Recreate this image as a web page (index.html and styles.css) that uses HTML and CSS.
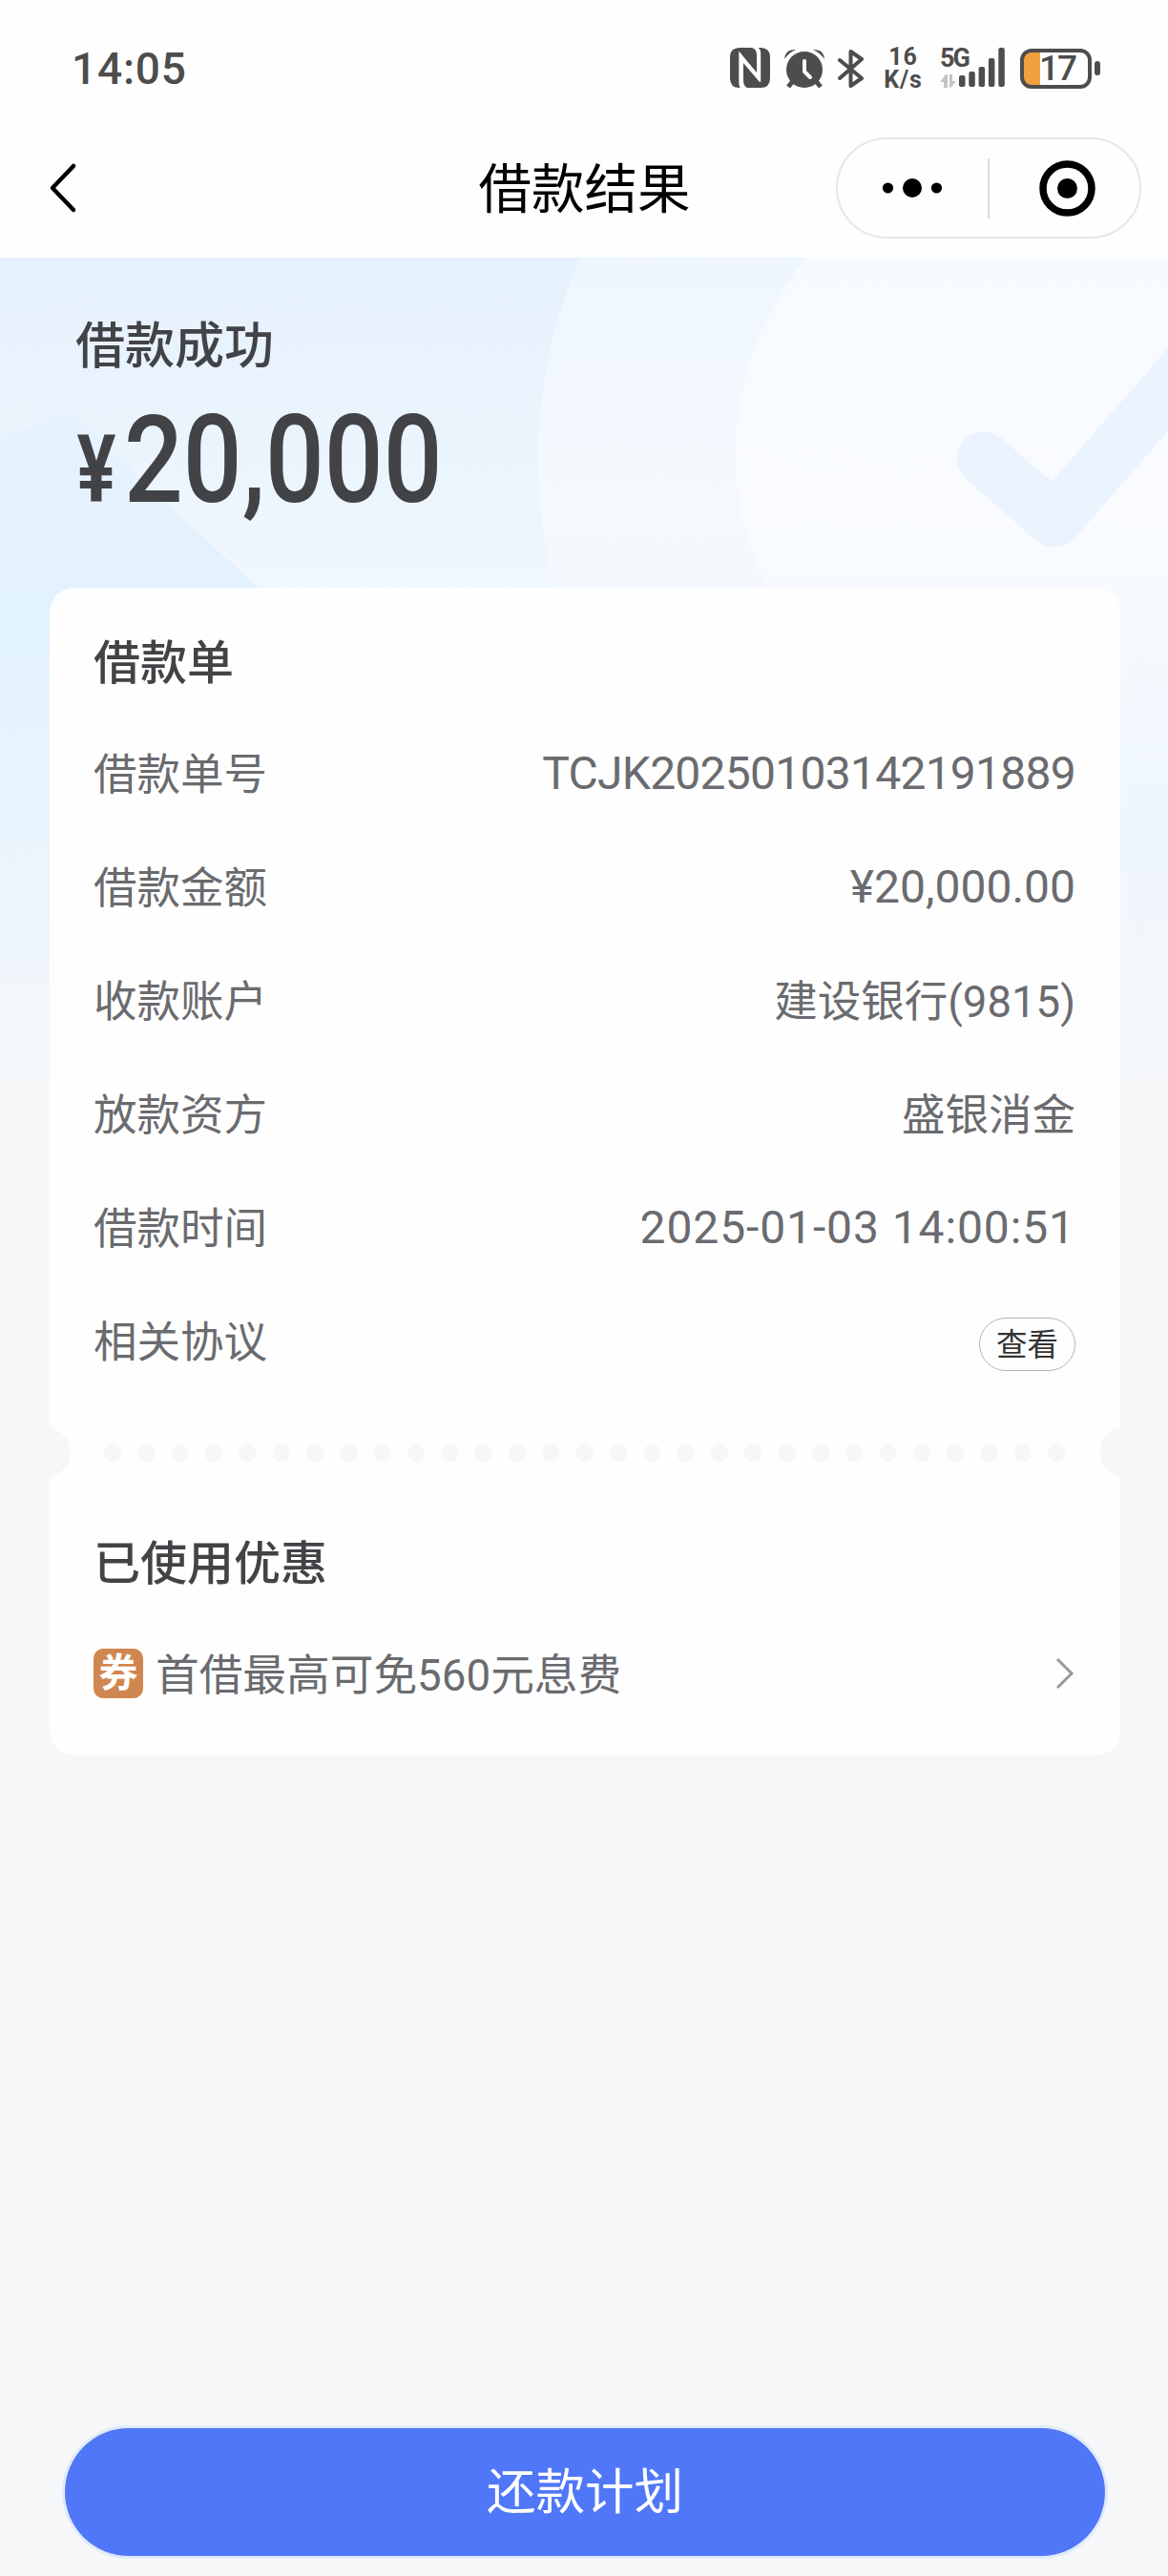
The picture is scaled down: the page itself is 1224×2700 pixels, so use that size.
FILE: index.html
```
<!DOCTYPE html>
<html lang="zh-CN">
<head>
    <meta charset="UTF-8">
    <meta name="viewport" content="width=device-width, initial-scale=1.0">
    <title>借款结果</title>
    <link rel="stylesheet" href="styles.css">
</head>
<body>
    <div class="status">
        <span class="clock">14:05</span>
        <div class="status-icons">
            <svg class="nfc" width="42" height="42" viewBox="0 0 42 42">
                <path fill="#4d4d4d" d="M10 0H23Q28 1 28 8V26L11 6V38Q11 41 13 42H10Q0 42 0 32V10Q0 0 10 0Z"/>
                <path fill="#4d4d4d" d="M29 0H32Q42 0 42 10V32Q42 42 32 42H18Q14 40 14 34V16L31 36V6Q31 2 29 0Z"/>
                <path fill="none" stroke="#fff" stroke-width="2.4" d="M12 42Q10.500 40 10.500 36V7L31 33V6Q31 2 28 0"/>
            </svg>
            <svg class="alarm" width="42" height="42" viewBox="0 0 42 42">
                <path stroke="#4d4d4d" stroke-width="5" d="M9 34L4 40M33 34L38 40"/>
                <circle cx="21" cy="22" r="19" fill="#4d4d4d"/>
                <path fill="#4d4d4d" d="M0 11Q1 0 12 1Q5 4 0 11ZM42 11Q41 0 30 1Q37 4 42 11Z"/>
                <path fill="none" stroke="#fff" stroke-width="4" stroke-linecap="round" stroke-linejoin="round" d="M21 13V24L27 30"/>
            </svg>
            <svg class="bt" width="28" height="42" viewBox="0 0 28 42">
                <path fill="none" stroke="#4d4d4d" stroke-width="4" stroke-linecap="round" stroke-linejoin="round" d="M2 12L25 31L13.500 39V3L25 11L2 31"/>
            </svg>
            <div class="speed"><span>16</span><span>K/s</span></div>
            <div class="network">
                <div class="network-type">
                    <span>5G</span>
                    <svg width="17" height="14" viewBox="0 0 17 14">
                        <path fill="#c4c4c4" d="M6 0H8V14H4V8H0ZM10 0H13V7H17L11 14H10Z"/>
                    </svg>
                </div>
                <svg class="bars" width="48" height="42" viewBox="0 0 48 42">
                    <g fill="#4d4d4d">
                        <rect x="0" y="29" width="6.500" height="12" rx="2"/>
                        <rect x="10.300" y="25" width="6.500" height="16" rx="2"/>
                        <rect x="20.600" y="20" width="6.500" height="21" rx="2"/>
                        <rect x="30.900" y="11" width="6.500" height="30" rx="2"/>
                        <rect x="41.300" y="0" width="6.500" height="41" rx="2"/>
                    </g>
                </svg>
            </div>
            <div class="battery"><span class="battery-box">17</span><i></i></div>
        </div>
    </div>

    <div class="navbar">
        <svg class="back" width="30" height="54" viewBox="0 0 30 54">
            <path fill="none" stroke="#000" stroke-width="4.500" stroke-linecap="round" stroke-linejoin="round" d="M26 4L4 27L26 50"/>
        </svg>
        <h1>借款结果</h1>
        <div class="capsule">
            <svg width="316" height="102" viewBox="0 0 316 102">
                <circle cx="52.500" cy="51" r="5.600"/>
                <circle cx="78" cy="51" r="10"/>
                <circle cx="103.500" cy="51" r="5.600"/>
                <path stroke="#dcdcdc" stroke-width="2" d="M158 20V83"/>
                <circle cx="240.500" cy="51.500" r="25.500" fill="none" stroke="#000" stroke-width="7.500"/>
                <circle cx="240.500" cy="51.500" r="10.500"/>
            </svg>
        </div>
    </div>

    <div class="page">
        <!-- 背景装饰 -->
        <svg class="page-bg" width="1224" height="870" viewBox="0 0 1224 870">
            <defs>
                <linearGradient id="sky" x1="0" y1="0" x2="0" y2="1">
                    <stop offset="0" stop-color="#e5f1fd"/>
                    <stop offset=".4" stop-color="#f0f7fd"/>
                    <stop offset=".7" stop-color="#eff6fd"/>
                    <stop offset="1" stop-color="#f5f7f9"/>
                </linearGradient>
                <linearGradient id="beam" x1="0" y1="0" x2="0" y2="1">
                    <stop offset="0" stop-color="#e0f0ff" stop-opacity=".4"/>
                    <stop offset=".35" stop-color="#e0f1ff" stop-opacity=".9"/>
                    <stop offset=".6" stop-color="#e6f4ff" stop-opacity=".8"/>
                    <stop offset="1" stop-color="#e6f4ff" stop-opacity="0"/>
                </linearGradient>
                <linearGradient id="ring" x1="0" y1="0" x2="0" y2="1">
                    <stop offset=".2" stop-color="#ecf5fe"/>
                    <stop offset=".55" stop-color="#f5f9fe"/>
                    <stop offset=".85" stop-color="#f5f9fe" stop-opacity="0"/>
                </linearGradient>
                <linearGradient id="disc" x1="0" y1="0" x2="0" y2="1">
                    <stop offset=".2" stop-color="#f7faff"/>
                    <stop offset=".6" stop-color="#f9fbff"/>
                    <stop offset=".95" stop-color="#f7fbff" stop-opacity="0"/>
                </linearGradient>
            </defs>
            <rect width="1224" height="870" fill="url(#sky)"/>
            <path d="M0 190L72 160L270 346L400 600L0 800Z" fill="url(#beam)"/>
            <circle cx="1084" cy="210" r="520" fill="url(#ring)"/>
            <circle cx="1091" cy="205" r="320" fill="url(#disc)"/>
            <path fill="none" stroke="#eaf3fe" stroke-width="57" stroke-linecap="round" stroke-linejoin="round" d="M1031 211L1105 275L1260 97"/>
        </svg>

        <div class="result">
            <h2>借款成功</h2>
            <p class="amount"><span class="yen">¥</span><span class="sum">20,000</span></p>
        </div>

        <div class="card">
            <h3>借款单</h3>
            <ul class="rows">
                <li><span>借款单号</span><span class="value number">TCJK20250103142191889</span></li>
                <li><span>借款金额</span><span class="value money">¥20,000.00</span></li>
                <li><span>收款账户</span><span class="value">建设银行(9815)</span></li>
                <li><span>放款资方</span><span class="value">盛银消金</span></li>
                <li><span>借款时间</span><span class="value time">2025-01-03 14:00:51</span></li>
                <li><span>相关协议</span><a class="view">查看</a></li>
            </ul>
            <div class="tear"><div class="dots"></div></div>
            <h3 class="used">已使用优惠</h3>
            <div class="coupon">
                <span class="tag">券</span>
                <span class="coupon-name">首借最高可免560元息费</span>
                <svg width="20" height="34" viewBox="0 0 20 34">
                    <path fill="none" stroke="#999" stroke-width="3" d="M1 2L16 17L1 32"/>
                </svg>
            </div>
        </div>

        <button class="plan">还款计划</button>
    </div>
</body>
</html>
```
FILE: styles.css
```
*{
    box-sizing: border-box;
    margin: 0;
    padding: 0;
}
body{
    width: 1224px;
    height: 2700px;
    display: flex;
    flex-direction: column;
    background-color: #fefefe;
    font-family: Roboto, "Noto Sans CJK SC", sans-serif;
    color: #6a6b6f;
    overflow: hidden;
}

/* 状态栏 */
.status{
    height: 144px;
    padding: 50px 71px 0 75px;
    display: flex;
    justify-content: space-between;
    align-items: flex-start;
    color: #4d4d4d;
}
.clock{
    font-size: 46px;
    font-weight: 500;
    line-height: 44px;
    letter-spacing: 0.8px;
}
.status-icons{
    display: flex;
    height: 43px;
}
.alarm{
    margin-left: 15px;
    margin-top: 1px;
}
.bt{
    margin-left: 14px;
    margin-top: 1px;
}
.speed{
    margin-left: 17px;
    margin-top: -1px;
    width: 47px;
    display: flex;
    flex-direction: column;
    align-items: center;
    font-size: 25px;
    font-weight: 700;
    line-height: 22px;
    letter-spacing: 0.8px;
    gap: 2px;
}
.network{
    display: flex;
    margin-left: 15px;
}
.network-type{
    width: 20px;
    display: flex;
    flex-direction: column;
    font-size: 27px;
    font-weight: 700;
    line-height: 22px;
    letter-spacing: -2px;
    gap: 6px;
}
.battery{
    margin-left: 16px;
    display: flex;
    align-items: center;
    gap: 3px;
}
.battery-box{
    width: 75px;
    height: 42px;
    border: 4px solid #4d4d4d;
    border-radius: 12px;
    background: linear-gradient(to right, #eea13d 17px, #fff 17px);
    font-size: 37px;
    font-weight: 500;
    line-height: 34px;
    padding-left: 16px;
    letter-spacing: -2px;
}
.battery i{
    width: 6px;
    height: 15px;
    border-radius: 3px;
    background-color: #4d4d4d;
}

/* 导航栏 */
.navbar{
    height: 126px;
    padding: 0 28px 20px 51px;
    display: grid;
    grid-template-columns: 320px 1fr 320px;
    align-items: center;
    color: #000;
}
.navbar h1{
    margin-left: -22px;
    padding-top: 6px;
    font-size: 55.500px;
    font-weight: 400;
    line-height: 80px;
    text-align: center;
}
.capsule{
    height: 106px;
    border: 2px solid #e6e6e6;
    border-radius: 53px;
}
.capsule svg{
    display: block;
}

/* 内容 */
.page{
    position: relative;
    flex: 1;
    display: flex;
    flex-direction: column;
    background-color: #f5f7f9;
}
.page-bg{
    position: absolute;
    top: 0;
    left: 0;
}
.result{
    position: relative;
    height: 346px;
    padding: 54px 80px 0 79px;
    color: #424346;
}
.result h2{
    font-size: 52px;
    font-weight: 500;
    line-height: 80px;
}
.amount{
    display: flex;
    align-items: baseline;
    margin-top: 3px;
    font-weight: 500;
    line-height: 150px;
}
.yen{
    width: 51px;
    padding-left: 2px;
    font-size: 98px;
    font-weight: 700;
    transform: scaleX(0.78);
    transform-origin: left;
}
.sum{
    font-size: 128px;
    transform: scaleX(0.85);
    transform-origin: left;
}

.card{
    position: relative;
    height: 1224px;
    margin: 0 50px 0 52px;
    padding: 40px 47px 0 46px;
    border-radius: 26px;
    background-color: #fefefe;
}
.card h3{
    font-size: 49px;
    font-weight: 500;
    line-height: 80px;
    color: #424346;
}
.rows{
    list-style: none;
    margin-top: 12px;
}
.rows li{
    height: 119px;
    display: flex;
    justify-content: space-between;
    align-items: center;
    font-size: 45.500px;
}
.number, .money, .time{
    margin-top: 6px;
    font-size: 48px;
}
.number{
    letter-spacing: -0.75px;
}
.time{
    letter-spacing: 0.9px;
}
.view{
    width: 101px;
    height: 56px;
    margin-top: 12px;
    border: 1px solid #b5b5b5;
    border-radius: 28px;
    font-size: 32.500px;
    line-height: 56px;
    text-align: center;
    color: #333;
}
/* 撕票线 */
.tear{
    height: 53px;
    margin: 34px -47px 0 -46px;
    padding: 0 56px 0 57px;
    display: flex;
    align-items: center;
    background: radial-gradient(circle at -5px 26px, #f5f7f9 26px, transparent 27px),
                radial-gradient(circle at 1127px 26px, #f5f7f9 26px, transparent 27px);
}
.dots{
    width: 1010px;
    height: 18px;
    background: radial-gradient(circle at 9px 9px, #f5f7f9 9px, transparent 9.500px) 0 0 / 35.340px 18px;
}
.used{
    margin-top: 51px;
}
.coupon{
    display: flex;
    align-items: center;
    height: 80px;
    margin-top: 34px;
    font-size: 45.700px;
}
.tag{
    width: 52px;
    height: 52px;
    border-radius: 10px;
    background-color: #d08650;
    color: #fff;
    font-size: 41px;
    font-weight: 700;
    line-height: 53px;
    text-align: center;
}
.coupon-name{
    flex: 1;
    margin-left: 13px;
    padding-bottom: 5px;
}

.plan{
    width: 1090px;
    height: 134px;
    margin: auto auto 21px 68px;
    border: none;
    border-radius: 67px;
    background-color: #5077f7;
    box-shadow: 0 0 0 3px #e2eafb;
    color: #fff;
    font-family: inherit;
    font-size: 51.500px;
    line-height: 136px;
}
```
